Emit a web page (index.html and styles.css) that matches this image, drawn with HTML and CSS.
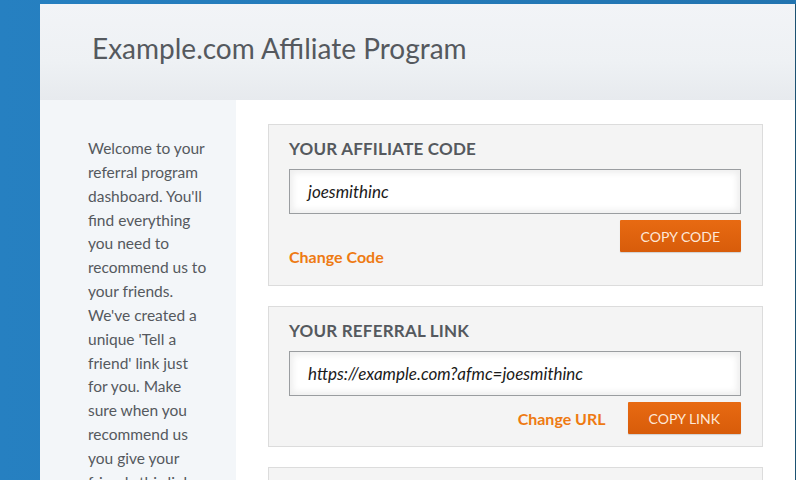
FILE: index.html
```html
<!DOCTYPE html>
<html>
<head>
<meta charset="utf-8">
<link rel="stylesheet" href="styles.css">
</head>
<body>
<div class="page">
  <header class="header">
    <h1 class="title">Example.com Affiliate Program</h1>
  </header>
  <div class="body">
    <aside class="sidebar">
      <p class="intro">Welcome to your referral program dashboard. You'll find everything you need to recommend us to your friends. We've created a unique 'Tell a friend' link just for you. Make sure when you recommend us you give your friends this link.</p>
    </aside>
    <main class="main">
      <section class="card">
        <h2 class="card-title">Your Affiliate Code</h2>
        <div class="field">joesmithinc</div>
        <div class="actions">
          <button class="btn">COPY CODE</button>
        </div>
        <a class="link link-below">Change Code</a>
      </section>
      <section class="card card-tight">
        <h2 class="card-title">Your Referral Link</h2>
        <div class="field">https://example.com?afmc=joesmithinc</div>
        <div class="actions">
          <a class="link">Change URL</a>
          <button class="btn">COPY LINK</button>
        </div>
      </section>
      <section class="card card-empty"></section>
    </main>
  </div>
</div>
</body>
</html>
```

FILE: styles.css
```css
* { box-sizing: border-box; }
html, body { margin: 0; padding: 0; }
body {
  background: linear-gradient(90deg, #2680c1 0%, #2274b0 100%);
  font-family: Lato, "Open Sans", sans-serif;
  color: #555;
  height: 480px;
  overflow: hidden;
}
.page {
  margin: 4px 0 0 40px;
  width: 756px;
  height: 476px;
  overflow: hidden;
  background: #fff;
  border-right: 1px solid #1d5272;
}
.header {
  height: 96px;
  background: linear-gradient(180deg, #f2f4f7 0%, #eef1f4 60%, #e7eaee 100%);
  padding: 27px 0 0 52px;
}
.title {
  margin: 0;
  font-size: 28px;
  font-weight: 400;
  line-height: 34px;
  color: #55595e;
}
.body {
  display: flex;
  height: 380px;
}
.sidebar {
  width: 196px;
  flex: none;
  background: #f3f6f9;
  padding: 37px 28px 0 48px;
}
.intro {
  margin: 0;
  font-size: 15.5px;
  line-height: 23.85px;
  color: #55595e;
}
.main {
  flex: 1;
  padding: 24px 32px 0 32px;
  display: flex;
  flex-direction: column;
  gap: 20px;
}
.card {
  flex: none;
  background: #f4f4f4;
  border: 1px solid #dcdcdc;
  padding: 14px 21px 18px 20px;
}
.card-tight { padding-bottom: 12px; }
.card-empty { height: 60px; }
.card-title {
  margin: 0;
  font-size: 17px;
  font-weight: 700;
  line-height: 20px;
  text-transform: uppercase;
  letter-spacing: 0.2px;
  color: #55595e;
}
.field {
  margin-top: 10px;
  height: 45px;
  border: 1px solid #9a9da0;
  background: #fff;
  box-shadow: inset 0 0 6px 3px #eeeeee;
  padding: 0 18px;
  display: flex;
  align-items: center;
  font-style: italic;
  font-size: 17px;
  color: #1a1a1a;
}
.actions {
  margin-top: 6px;
  display: flex;
  justify-content: flex-end;
  align-items: center;
  gap: 22px;
}
.btn {
  height: 32px;
  padding: 0 21px;
  border: none;
  border-radius: 1px;
  background: linear-gradient(180deg, #e86a12 0%, #d85c0a 100%);
  box-shadow: 0 1px 1px rgba(0,0,0,0.15);
  color: #fde8d8;
  font-family: Lato, "Open Sans", sans-serif;
  font-size: 14px;
  font-weight: 400;
}
.link {
  color: #ee7a12;
  font-weight: 700;
  font-size: 16px;
}
.link-below {
  display: block;
  margin-top: -5px;
  line-height: 20px;
}
```
